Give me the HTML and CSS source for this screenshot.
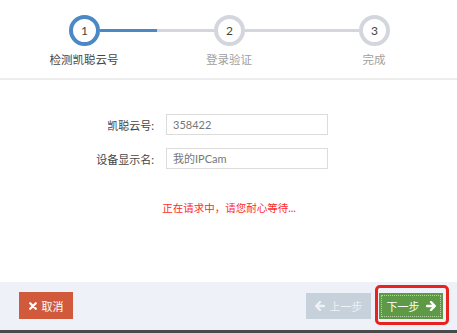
FILE: index.html
```html
<!DOCTYPE html>
<html>
<head>
<meta charset="utf-8">
<link rel="stylesheet" href="styles.css">
</head>
<body>
<div class="page">
  <div class="steps">
    <div class="track">
      <div class="circle active">1</div>
      <div class="line blue"></div>
      <div class="line"></div>
      <div class="circle">2</div>
      <div class="line"></div>
      <div class="line"></div>
      <div class="circle">3</div>
    </div>
    <div class="labels">
      <div class="label active">检测凯聪云号</div>
      <div class="label">登录验证</div>
      <div class="label">完成</div>
    </div>
  </div>
  <div class="content">
    <div class="form">
      <label class="flabel">凯聪云号:</label>
      <div class="input">358422</div>
      <label class="flabel">设备显示名:</label>
      <div class="input">我的IPCam</div>
    </div>
    <div class="status">正在请求中，请您耐心等待...</div>
  </div>
  <div class="footer">
    <button class="btn cancel"><svg class="ico" width="8" height="8" viewBox="0 0 10 10"><path d="M1.5 1.5 L8.5 8.5 M8.5 1.5 L1.5 8.5" stroke="#fff" stroke-width="2.8" stroke-linecap="round"/></svg>取消</button>
    <div class="spacer"></div>
    <button class="btn prev"><svg class="ico" width="10" height="10" viewBox="0 0 10 10"><path d="M5 1 L1.2 5 L5 9 M1.5 5 H9" stroke="#eef2f6" stroke-width="2.4" fill="none" stroke-linecap="round" stroke-linejoin="round"/></svg>上一步</button>
    <div class="next-wrap">
      <button class="btn next">下一步<svg class="ico right" width="10" height="10" viewBox="0 0 10 10"><path d="M5 1 L8.8 5 L5 9 M8.5 5 H1" stroke="#fff" stroke-width="2.4" fill="none" stroke-linecap="round" stroke-linejoin="round"/></svg></button>
    </div>
  </div>
  <div class="bottombar"></div>
</div>
</body>
</html>
```
FILE: styles.css
```css
* { box-sizing: border-box; }
html, body { margin: 0; padding: 0; background: #fff; }
body {
  font-family: "Lato", "Noto Sans CJK SC", sans-serif;
  font-size: 12px;
  width: 457px;
  height: 333px;
  overflow: hidden;
}
.page { display: flex; flex-direction: column; height: 333px; }
.steps {
  height: 80px;
  border-bottom: 2px solid #ececec;
  padding-top: 15px;
}
.track {
  display: flex;
  align-items: center;
  margin-left: 69px;
  width: 321px;
  height: 31px;
}
.circle {
  width: 31px;
  height: 31px;
  flex: none;
  border: 4px solid #d3d6dc;
  border-radius: 50%;
  display: flex;
  align-items: center;
  justify-content: center;
  font-size: 12px;
  color: #444;
  background: #fff;
}
.circle.active { border-color: #4a88c6; }
.line { flex: 1; height: 3px; background: #d3d6dc; }
.line.blue { background: #4a88c6; }
.labels {
  display: grid;
  grid-template-columns: repeat(3, 145px);
  margin-left: 11.5px;
  margin-top: 6px;
}
.label {
  text-align: center;
  color: #a0a0a0;
  font-size: 11.5px;
  line-height: 16px;
}
.label.active { color: #444; }
.content { flex: 1; }
.form {
  display: grid;
  grid-template-columns: 90px 162px;
  column-gap: 12px;
  row-gap: 13px;
  margin-left: 64px;
  margin-top: 34px;
  align-items: center;
}
.flabel { text-align: right; color: #444; font-size: 11px; }
.input {
  height: 21px;
  border: 1px solid #dcdcdc;
  color: #777;
  font-size: 11px;
  line-height: 19px;
  padding-left: 6px;
}
.status {
  text-align: center;
  color: #ff2a2a;
  font-size: 10.5px;
  margin-top: 31px;
  padding-left: 1px;
}
.footer {
  height: 48px;
  background: #eef1f7;
  display: flex;
  align-items: flex-start;
  padding: 10px 14px 0 19px;
}
.spacer { flex: 1; }
.btn {
  border: none;
  height: 27px;
  color: #fff;
  font-family: "Lato", "Noto Sans CJK SC", sans-serif;
  font-size: 11px;
  display: flex;
  align-items: center;
  justify-content: center;
  padding: 0;
}
.ico { margin-right: 5px; }
.ico.right { margin-right: 0; margin-left: 6px; }
.cancel { width: 54px; background: #d25a3c; }
.prev { width: 65px; background: #c6d1db; color: #eef2f6; margin-top: 1px; height: 26px; }
.next-wrap { position: relative; margin-left: 8px; margin-top: 1px; }
.next { width: 64px; height: 26px; background: #5e9945; position: relative; }
.next::before {
  content: "";
  position: absolute;
  inset: 2px;
  border: 1px dotted rgba(255,255,255,0.55);
}
.next-wrap::after {
  content: "";
  position: absolute;
  top: -8px;
  left: -4px;
  right: -6px;
  bottom: -6px;
  border: 3px solid #e8231d;
  border-radius: 5px;
}
.bottombar { height: 3px; background: #4a4a4a; }
```
